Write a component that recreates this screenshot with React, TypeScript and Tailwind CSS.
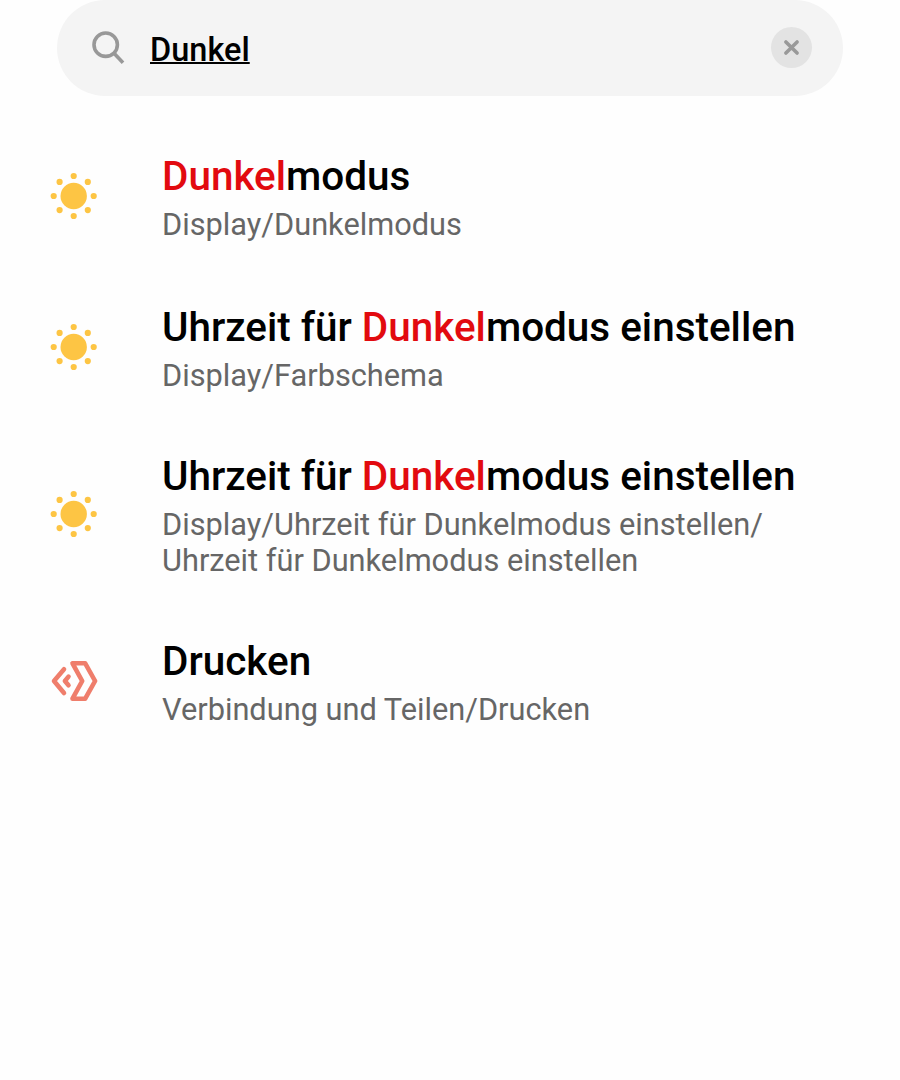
import { useState } from "react";

type Result = {
  title: string;
  path: string[];
  icon: "display" | "connect";
  spacing: string;
};

const results: Result[] = [
  {
    title: "Dunkelmodus",
    path: ["Display/Dunkelmodus"],
    icon: "display",
    spacing: "mt-14",
  },
  {
    title: "Uhrzeit für Dunkelmodus einstellen",
    path: ["Display/Farbschema"],
    icon: "display",
    spacing: "mt-[60px]",
  },
  {
    title: "Uhrzeit für Dunkelmodus einstellen",
    path: [
      "Display/Uhrzeit für Dunkelmodus einstellen/",
      "Uhrzeit für Dunkelmodus einstellen",
    ],
    icon: "display",
    spacing: "mt-[58px]",
  },
  {
    title: "Drucken",
    path: ["Verbindung und Teilen/Drucken"],
    icon: "connect",
    spacing: "mt-[58px]",
  },
];

const rays = [
  [24, 4],
  [38.1, 9.9],
  [44, 24],
  [38.1, 38.1],
  [24, 44],
  [9.9, 38.1],
  [4, 24],
  [9.9, 9.9],
];

function SunIcon() {
  return (
    <svg viewBox="0.3 0 48 48" className="size-12" fill="#fdc544">
      <circle cx="24" cy="24" r="13.2" />
      {rays.map(([x, y]) => (
        <circle key={`${x}-${y}`} cx={x} cy={y} r="3.1" />
      ))}
    </svg>
  );
}

function ConnectIcon() {
  return (
    <svg
      viewBox="0 0 48 48"
      className="size-12"
      fill="none"
      stroke="#ef7e6c"
      strokeWidth="4.6"
      strokeLinecap="round"
      strokeLinejoin="round"
    >
      <path d="M22.5 6.3H35.2L45.1 24L35.2 41.7H22.5L32.2 24Z" />
      <path d="M14 12.2L4 24L14 36" />
      <path d="M18.5 19.6L14.9 24L18.5 28.2" />
    </svg>
  );
}

function Highlight({ text, query }: { text: string; query: string }) {
  const start = query ? text.indexOf(query) : -1;
  if (start < 0) return <>{text}</>;
  return (
    <>
      {text.slice(0, start)}
      <span className="text-[#e20a0f]">{query}</span>
      {text.slice(start + query.length)}
    </>
  );
}

export default function App() {
  const [query, setQuery] = useState("Dunkel");

  return (
    <div className="min-h-screen bg-[#fefefe] font-['Roboto',sans-serif] text-black">
      <header className="ml-[57px] flex h-24 w-[786px] items-center rounded-[48px] bg-[#f4f4f4] pl-[34px] pr-[31px]">
        <svg
          viewBox="0 0 34 34"
          className="size-[34px] shrink-0"
          fill="none"
          stroke="#989898"
          strokeWidth="3.6"
        >
          <circle cx="14.7" cy="13.7" r="11.7" />
          <path d="M22.8 22L32 31.8" />
        </svg>
        <input
          type="text"
          value={query}
          onChange={(e) => setQuery(e.target.value)}
          className="ml-[25px] mt-[5px] h-12 min-w-0 flex-1 text-[32.5px] font-medium underline decoration-2 underline-offset-1 outline-none"
        />
        <button
          onClick={() => setQuery("")}
          className="mb-px flex size-[41px] items-center justify-center rounded-full bg-[#e3e3e3]"
        >
          <svg
            viewBox="0 0 17 17"
            className="size-[17px]"
            stroke="#999999"
            strokeWidth="3.6"
            strokeLinecap="round"
          >
            <path d="M2.9 2.9L14.1 14.1M14.1 2.9L2.9 14.1" />
          </svg>
        </button>
      </header>

      <ul>
        {results.map((item, i) => (
          <li key={i} className={`flex items-center pl-[50px] ${item.spacing}`}>
            <div className="mb-[3px] shrink-0">
              {item.icon === "display" ? <SunIcon /> : <ConnectIcon />}
            </div>
            <div className="ml-16 whitespace-nowrap">
              <h2 className="text-[40.45px]/[48px] font-medium">
                <Highlight text={item.title} query={query} />
              </h2>
              <p className="mt-[7px] text-[30.75px]/[36px] text-[#666666]">
                {item.path.map((line) => (
                  <span key={line} className="block">
                    {line}
                  </span>
                ))}
              </p>
            </div>
          </li>
        ))}
      </ul>
    </div>
  );
}
